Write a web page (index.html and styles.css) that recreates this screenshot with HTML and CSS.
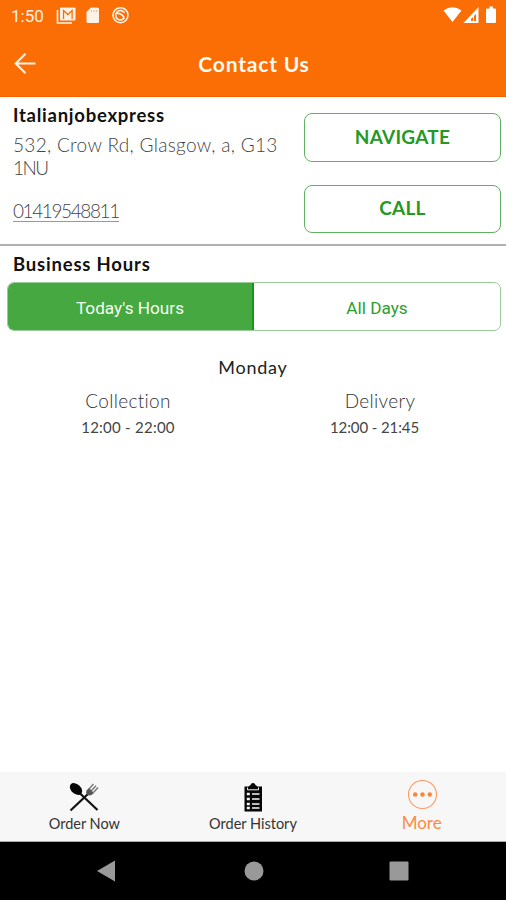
FILE: index.html
```html
<!DOCTYPE html>
<html lang="en">
<head>
<meta charset="utf-8">
<title>Contact Us</title>
<link rel="stylesheet" href="styles.css">
</head>
<body>
<div class="screen">
  <header class="top">
    <div class="status">
      <span class="clock">1:50</span>
      <svg class="notif" width="76" height="20" viewBox="0 0 76 20" fill="none" stroke="#fff3e8">
        <path d="M1.500 4v13H16" stroke-width="1.600"/>
        <rect x="4" y="1.500" width="15.500" height="13" rx="1" fill="#fff3e8" stroke="none"/>
        <path d="M7.500 13V4.500l4.300 4 4.300-4V13" stroke="#fb6d05" stroke-width="1.300"/>
        <path d="M35 1.500h6.500q1.500 0 1.500 1.500v12.500q0 1.500-1.500 1.500H32q-1.500 0-1.500-1.500V6z" fill="#fff3e8" stroke="none"/>
        <path d="M35.500 4v2M38 4v2M40.500 4v2" stroke="#fb9d55" stroke-width=".7"/>
        <circle cx="64.500" cy="9.200" r="7.500" stroke-width="1.600"/>
        <path d="M68.500 11.500a4.700 4.700 0 1 1 0-4.600M61 7.500q4-1 7 4" stroke-width="1.700"/>
      </svg>
      <svg class="signal" width="56" height="20" viewBox="0 0 56 20">
        <path d="M1.500 4.500Q10.500-2 19.500 4.500L10.500 16z" fill="#fff"/>
        <path d="M36.500 1v16H21.500z" fill="#fff"/>
        <path d="M34 8v7h-5v-2z" fill="#fb6d05"/><path d="M31.500 10v5.500" stroke="#fff" stroke-width="1"/>
        <path d="M45 2.500h2.500V.5h3.500v2h2q1 0 1 1V16q0 1-1 1h-8q-1 0-1-1V3.500q0-1 1-1z" fill="#fff"/>
      </svg>
    </div>
    <div class="bar">
      <svg class="back" width="24" height="24" viewBox="0 0 24 24" fill="none" stroke="#fff3e8" stroke-width="2.200"><path d="M22.500 11.500H2.500M12.500 1.700L2.700 11.500l9.800 9.800"/></svg>
      <h1>Contact Us</h1>
    </div>
  </header>
  <main>
    <section class="contact">
      <div class="info">
        <h2 class="name">Italianjobexpress</h2>
        <p class="address"><span class="line1">532, Crow Rd, Glasgow, a, G13</span><br><span class="line2">1NU</span></p>
        <a class="phone">01419548811</a>
      </div>
      <div class="actions">
        <button class="nav-btn">NAVIGATE</button>
        <button class="call-btn">CALL</button>
      </div>
    </section>
    <section class="hours">
      <h2 class="hours-title">Business Hours</h2>
      <div class="tabs"><span class="tab active">Today's Hours</span><span class="tab">All Days</span></div>
      <p class="day">Monday</p>
      <div class="slots">
        <div><p class="kind">Collection</p><p class="time">12:00 - 22:00</p></div>
        <div><p class="kind">Delivery</p><p class="time late">12:00 - 21:45</p></div>
      </div>
    </section>
  </main>
  <nav class="bottom">
    <div class="item">
      <svg width="30" height="30" viewBox="0 0 30 30">
        <path d="M9 9.500L28.500 28" stroke="#111" stroke-width="2.200"/>
        <ellipse cx="7" cy="7" rx="7" ry="4.800" transform="rotate(42 7 7)" fill="#050505"/>
        <path d="M19.500 11.500L1.500 28.500" stroke="#111" stroke-width="2.200"/>
        <path d="M17.500 8.500L20 6l5 5-2.500 2q-3 1-4.500-.5t-.5-4z" fill="#555"/>
        <path d="M20 7l4.500-5M22.300 8.800l4.700-5M24.500 10.500l4.500-5" stroke="#777" stroke-width="1.400"/>
      </svg>
      <span class="label">Order Now</span>
    </div>
    <div class="item">
      <svg width="30" height="30" viewBox="0 0 30 30">
        <path d="M6.500 4.500h4l2-1.500a2.600 2.600 0 0 1 5 0l2 1.500h4.500V29.500H6.500z" fill="#050505"/>
        <path d="M9.500 5.500v2.300h11V5.500" fill="none" stroke="#f7f7f7" stroke-width="1"/>
        <path d="M8.800 12h3M8.800 17h3M8.800 22h3M8.800 26h3" stroke="#f7f7f7" stroke-width="2.400"/>
        <path d="M14 12h7.500M14 17h7.500M14 22h7.500M14 26h7.500" stroke="#f7f7f7" stroke-width="1.500"/>
      </svg>
      <span class="label">Order History</span>
    </div>
    <div class="item current">
      <svg width="30" height="30" viewBox="0 0 30 30"><circle cx="15.500" cy="14.500" r="14" fill="none" stroke="#ff9b62" stroke-width="1.100"/><g fill="#fb8435"><circle cx="8.200" cy="14.500" r="2.200"/><circle cx="15.500" cy="14.500" r="2.200"/><circle cx="22.800" cy="14.500" r="2.200"/></g></svg>
      <span class="label more">More</span>
    </div>
  </nav>
  <footer class="system">
    <svg width="18" height="22" viewBox="0 0 18 22"><path d="M0 11L18 .5v21z" fill="#999"/></svg>
    <svg class="home" width="20" height="20" viewBox="0 0 20 20"><circle cx="10" cy="10" r="9.500" fill="#999"/></svg>
    <svg width="20" height="20" viewBox="0 0 20 20"><rect x=".5" y=".5" width="19" height="19" rx="1" fill="#999"/></svg>
  </footer>
</div>
</body>
</html>
```
FILE: styles.css
```css
* { box-sizing: border-box; }
body { margin: 0; background: #fff; font-family: Lato, "Liberation Sans", sans-serif; font-variant-ligatures: none; }
h1, h2, p { margin: 0; }
span, a, h1, h2, p, button { white-space: nowrap; }
.screen { width: 506px; height: 900px; display: flex; flex-direction: column; overflow: hidden; }
.top { height: 97px; background: #fb6d05; flex: none; border-bottom: 1px solid #f56000; }
.status { height: 32px; display: flex; padding: 6px 8px 0 11px; }
.clock { width: 45px; font: 17px/20px Roboto, sans-serif; color: #fff3e8; }
.signal { margin-left: auto; }
.bar { height: 63px; display: grid; grid-template-columns: 60px 1fr 60px; align-items: center; padding-left: 13px; padding-right: 11px; }
h1 { text-align: center; color: #fffaf2; font-size: 21px; line-height: 28px; font-weight: 700; letter-spacing: .8px; }
main { flex: 1; }
.contact { height: 149px; display: flex; justify-content: space-between; padding: 0 5px 0 13px; border-bottom: 2px solid #b0b0b0; }
.info { padding-top: 6px; }
.name, .hours-title { font-size: 18.500px; line-height: 24px; font-weight: 700; color: #111; }
.name { letter-spacing: .75px; }
.address { margin-top: 6px; font-size: 19px; line-height: 23px; color: #444; font-weight: 300; }
.line1 { letter-spacing: .33px; }
.line2 { letter-spacing: -1.500px; }
.phone { display: inline-block; margin-top: 22px; font-size: 19px; line-height: 20px; letter-spacing: -1.400px; color: #444; font-weight: 300; border-bottom: 1px solid #999; }
.actions { width: 197px; padding-top: 16px; display: flex; flex-direction: column; gap: 23px; }
.actions button { height: 49px; flex: none; background: #fff; border: 1px solid #62b162; border-radius: 8px; color: #249923; font: 700 19px/24px Lato, sans-serif; letter-spacing: .25px; padding: 0 0 2px; }
.actions .call-btn { height: 48px; }
.hours-title { padding: 6px 0 0 13px; letter-spacing: .8px; }
.tabs { margin: 6px 5px 0 7px; height: 49px; display: grid; grid-template-columns: 1fr 1fr; border: 1px solid #9bcb9d; border-radius: 7px; overflow: hidden; }
.tab { display: flex; align-items: center; justify-content: center; color: #2c9e2d; font: 17.200px/24px Roboto, sans-serif; padding-top: 2px; }
.tab.active { background: #46a840; color: #f2fff0; border-right: 2px solid #179817; }
.day { margin-top: 24px; text-align: center; font-size: 18px; line-height: 24px; letter-spacing: .75px; color: #222; }
.slots { display: grid; grid-template-columns: 1fr 1fr; text-align: center; margin-top: 10px; padding-left: 2px; }
.kind { font-size: 19px; line-height: 24px; letter-spacing: .3px; color: #333; font-weight: 300; }
.time { font-size: 15px; line-height: 22px; margin-top: 3px; letter-spacing: .25px; color: #444; }
.late { padding-right: 11px; letter-spacing: -.1px; }
.bottom { height: 70px; flex: none; background: #f7f7f7; display: grid; grid-template-columns: repeat(3, 1fr); border-bottom: 1px solid #aaa; }
.item { display: flex; flex-direction: column; align-items: center; padding-top: 10px; }
.label { font-size: 14.500px; line-height: 20px; color: #333; margin-top: 2px; }
.current { padding-top: 8px; }
.more { font-size: 17px; line-height: 22px; color: #fb8b45; }
.system { height: 58px; flex: none; background: #000; display: flex; justify-content: space-between; align-items: center; padding: 0 97px; }
.home { margin-left: 3px; }
```
